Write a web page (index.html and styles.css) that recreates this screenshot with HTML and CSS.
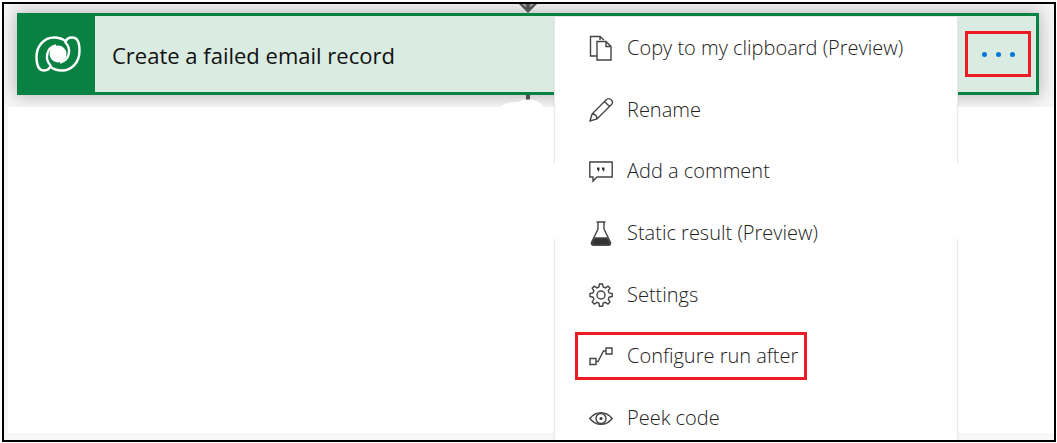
FILE: index.html
```html
<!DOCTYPE html>
<html lang="en">
<head>
<meta charset="utf-8">
<title>Flow action menu</title>
<link rel="stylesheet" href="styles.css">
</head>
<body>
<main class="frame">
  <section class="stage">
    <svg class="arrow" viewBox="0 0 20 10" aria-hidden="true"><path d="M0 0H20L10 10Z" fill="#505050"/><path d="M3 0L8 4V0M17 0L12 4V0" fill="#999"/></svg>
    <article class="card">
      <div class="brand">
        <svg viewBox="0 0 46 36" fill="none" stroke="#fff" stroke-width="2.4" aria-hidden="true">
          <path d="M31 5.500C28 3 24 1.500 19 1.500C9 1.500 1.500 10 1.500 21C1.500 29 3 34.500 9 34.500C13 34.500 15 32 15.500 29.500C9.500 23 11 12 21 9.500"/>
          <path d="M15 30.500C18 33 22 34.500 27 34.500C37 34.500 44.500 26 44.500 15C44.500 7 43 1.500 37 1.500C33 1.500 31 4 30.500 6.500C36.500 13 35 24 25 26.500"/>
          <circle cx="23" cy="18" r="8.500" fill="#fff" stroke="none"/>
        </svg>
      </div>
      <h1 class="title">Create a failed email record</h1>
      <button class="more mark" type="button" aria-label="More actions"><i></i><i></i><i></i></button>
    </article>
  </section>
  <div class="canvas">
    <svg class="connector" viewBox="0 0 56 14" aria-hidden="true"><path d="M28 0h4v6h-4z" fill="#505050"/><path d="M0 14C5 8 12 7 20 7C26 3 38 4 42 8C45 10 46 12 46 14Z" fill="#fff"/></svg>
  </div>
  <nav class="menu" aria-label="Action menu">
    <button class="item" type="button"><span class="entry">
      <svg viewBox="0 0 24 24"><path d="M8 20H1.500V.5H11L15 4M11 .5V4"/><path d="M8 5.500H17L22 10.500V24H8ZM17 5.500V10.500H22"/></svg>Copy to my clipboard (Preview)</span></button>
    <button class="item" type="button"><span class="entry">
      <svg viewBox="0 0 24 24"><path d="M1 23L3 16L17 2C19 0 21 .5 22.500 2C24 3.500 24 5.500 22 7L8 21ZM3 16C6 16 8 18 8 21M15.500 3.500L20.500 8.500"/></svg>Rename</span></button>
    <button class="item" type="button"><span class="entry">
      <svg viewBox="0 0 24 24"><path d="M.8 3H23.200V18H8L4 22V18H.8Z"/><path d="M8 8.500h2.500v2.500l-1.500 2v-2H8ZM13 8.500h2.500v2.500l-1.500 2v-2H13Z" fill="#333" stroke="none"/></svg>Add a comment</span></button>
    <button class="item" type="button"><span class="entry">
      <svg viewBox="0 0 24 24"><path d="M7.500 1H16.500M9 1V8L2.500 21.500Q2 24 4 24H20Q22 24 21.500 21.500L15 8V1"/><path d="M6 17H18L21 22Q21 24 19.500 24H4.500Q3 24 3 22Z" fill="#333"/></svg>Static result (Preview)</span></button>
    <button class="item" type="button"><span class="entry">
      <svg viewBox="0 0 24 24"><path d="M10.500 1H13.500L14.200 4L16.300 4.900L19 3.200L21 5.200L19.300 7.900L20.100 9.900L23.200 10.500V13.500L20.100 14.200L19.300 16.300L21 19L19 21L16.300 19.300L14.200 20.100L13.500 23.200H10.500L9.900 20.100L7.900 19.300L5.200 21L3.200 19L4.900 16.300L4 14.200L1 13.500V10.500L4 9.900L4.900 7.900L3.200 5.200L5.200 3.200L7.900 4.900L9.900 4Z"/><circle cx="12" cy="12" r="4"/></svg>Settings</span></button>
    <button class="item" type="button"><span class="entry mark">
      <svg viewBox="0 0 24 24"><path d="M1 14.500H7V20.500H1ZM17 4H23V10H17ZM7 17.500H9L14.500 7H17"/></svg>Configure run after</span></button>
    <button class="item" type="button"><span class="entry">
      <svg viewBox="0 0 24 24"><path d="M.8 12.500C7 4.800 17 4.800 23.200 12.500C17 20.200 7 20.200 .8 12.500Z"/><circle cx="12" cy="12.500" r="5"/><circle cx="12" cy="12.500" r="1.500" fill="#333" stroke="none"/></svg>Peek code</span></button>
  </nav>
</main>
</body>
</html>
```
FILE: styles.css
```css
* { box-sizing: border-box; }
body {
  margin: 0;
  height: 100vh;
  padding: 2px 1px 1px 2px;
  background: #fff;
  font-family: "Open Sans", "Noto Sans", sans-serif;
}
.frame {
  position: relative;
  display: flex;
  flex-direction: column;
  height: 100%;
  border: 2px solid #000;
  overflow: hidden;
  background: #f7f7f7;
}
.stage { padding: 9px 15px 12px 13px; }
.card {
  display: flex;
  align-items: center;
  height: 82px;
  border: 3px solid #088142;
  background: #daebe2;
  box-shadow: 0 0 16px 2px #bbb;
}
.brand {
  display: flex;
  align-items: center;
  justify-content: center;
  align-self: stretch;
  width: 75px;
  background: #088142;
}
.brand svg { width: 46px; height: 36px; }
.title {
  flex: 1;
  margin: 0;
  padding: 2px 0 0 17px;
  font-size: 22px;
  line-height: 30px;
  font-weight: 400;
  color: #111;
}
.mark { outline: 3px solid #ed1c24; outline-offset: -3px; }
.more {
  display: flex;
  align-items: center;
  justify-content: center;
  gap: 9px;
  width: 66px;
  height: 46px;
  margin-right: 5px;
  padding: 0;
  border: 0;
  background: none;
}
.more i { width: 5px; height: 5px; border-radius: 50%; background: #0078d7; }
.canvas { flex: 1; margin: 0 0 7px 4px; background: #fff; }
.arrow { position: absolute; z-index: 1; left: 50%; top: 0; width: 20px; height: 9px; margin-left: -11px; }
.connector { position: absolute; left: 50%; top: 91px; width: 56px; height: 14px; margin-left: -31px; }
.menu {
  position: absolute;
  top: 13px;
  right: 97px;
  bottom: -9px;
  width: 402px;
  display: grid;
  grid-auto-rows: 1fr;
  background: #fff;
  box-shadow: 0 0 0 1px #e8e8e8, 0 0 3px #0002;
}
.menu::before, .menu::after {
  content: "";
  position: absolute;
  top: 146px;
  width: 6px;
  height: 76px;
  background: #fff;
}
.menu::before { left: -6px; }
.menu::after { right: -6px; }
.item {
  display: flex;
  align-items: center;
  padding: 0 20px;
  border: 0;
  background: none;
  font: inherit;
  font-size: 20px;
  line-height: 28px;
  font-weight: 300;
  color: #222;
  text-align: left;
}
.entry {
  display: flex;
  align-items: center;
  gap: 14px;
  height: 48px;
  padding: 0 9px 0 14px;
  white-space: nowrap;
}
.entry svg { width: 24px; height: 24px; fill: none; stroke: #444; stroke-width: 1.4; overflow: visible; }
```
